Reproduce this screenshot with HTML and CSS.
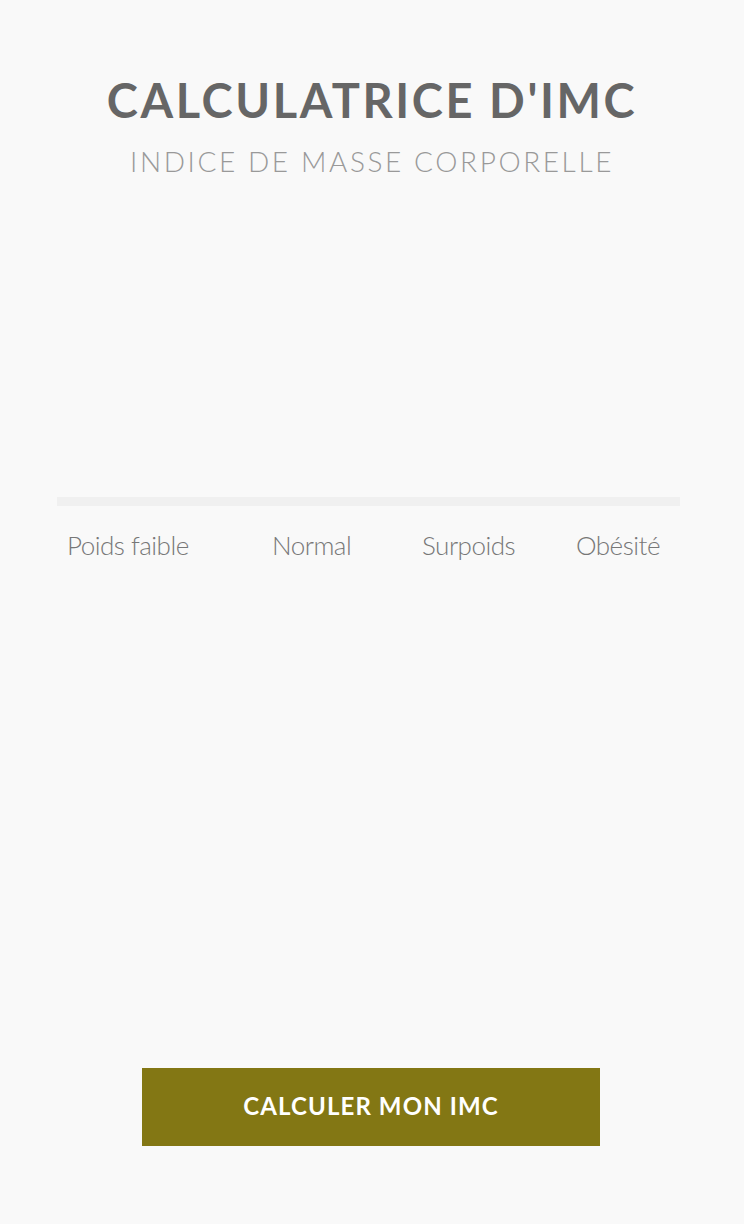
FILE: index.html
```html
<!DOCTYPE html>
<html lang="fr">
<head>
<meta charset="utf-8">
<title>Calculatrice d'IMC</title>
<link rel="stylesheet" href="styles.css">
</head>
<body>
<main class="page">
  <header class="head">
    <h1 class="title">CALCULATRICE D'IMC</h1>
    <p class="subtitle">INDICE DE MASSE CORPORELLE</p>
  </header>
  <section class="scale">
    <div class="bar"></div>
    <div class="labels">
      <span class="lbl">Poids faible</span>
      <span class="lbl">Normal</span>
      <span class="lbl">Surpoids</span>
      <span class="lbl">Obésité</span>
    </div>
  </section>
  <div class="actions">
    <button class="btn" type="button">CALCULER MON IMC</button>
  </div>
</main>
</body>
</html>
```
FILE: styles.css
```css
html, body {
  margin: 0;
  padding: 0;
  background: #f9f9f9;
}
body {
  font-family: "Lato", "Liberation Sans", sans-serif;
  width: 744px;
  height: 1224px;
  overflow: hidden;
}
.page {
  display: flex;
  flex-direction: column;
  height: 1224px;
}
.head {
  padding-top: 73px;
  text-align: center;
}
.title {
  margin: 0;
  font-size: 47px;
  line-height: 54px;
  font-weight: 700;
  letter-spacing: 2.6px;
  color: #666666;
}
.subtitle {
  margin: 17px 0 0;
  font-size: 28px;
  line-height: 34px;
  font-weight: 300;
  letter-spacing: 2.6px;
  color: #999999;
}
.scale {
  margin: 0 64px 0 57px;
  padding-top: 319px;
}
.bar {
  height: 9px;
  background: #f0f0f0;
}
.labels {
  display: grid;
  grid-template-columns: 205px 150px 154px 1fr;
  padding: 24px 0 0 10px;
  font-size: 26px;
  line-height: 30px;
  font-weight: 300;
  color: #777777;
  letter-spacing: -0.5px;
}
.actions {
  margin-top: auto;
  display: flex;
  justify-content: center;
  padding-bottom: 78px;
  padding-right: 2px;
}
.btn {
  width: 458px;
  height: 78px;
  border: 0;
  border-radius: 0;
  background: #837714;
  color: #ffffff;
  font-family: "Lato", "Liberation Sans", sans-serif;
  font-size: 24px;
  font-weight: 700;
  letter-spacing: 1.1px;
  padding: 0 0 4px;
}
```
